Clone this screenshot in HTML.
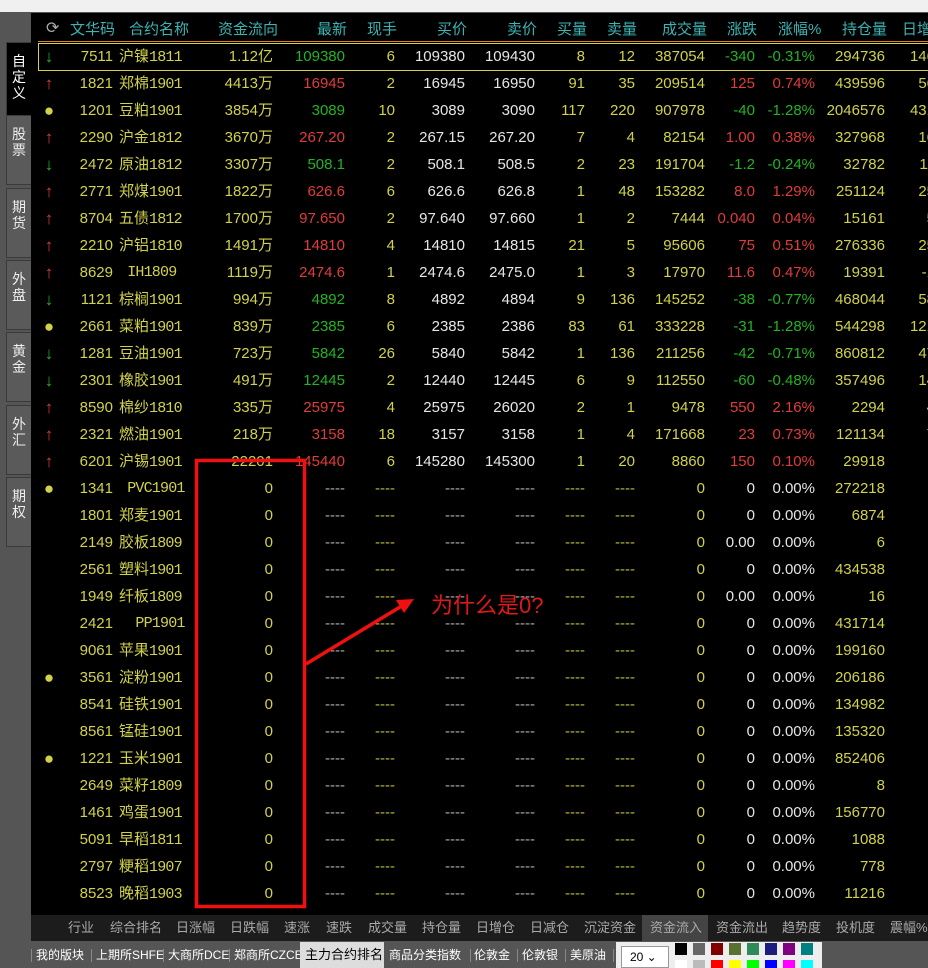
<!DOCTYPE html>
<html><head><meta charset="utf-8"><style>
*{margin:0;padding:0;box-sizing:border-box}
body{width:928px;height:968px;overflow:hidden;background:#555;position:relative;font-family:"Liberation Sans","Noto Sans CJK SC",sans-serif;font-size:15px}
#top{position:absolute;left:0;top:0;width:928px;height:12px;background:#f0f0f0}
#main{position:absolute;left:31px;top:13px;width:897px;height:902px;background:#000}
#hdr{position:absolute;left:38px;top:14px;height:28px;width:900px;color:#3cb4b4}
#hline{position:absolute;left:38px;top:41px;width:890px;height:1px;background:#e08020}
table{position:absolute;left:38px;top:43px;width:897px;border-collapse:collapse;table-layout:fixed}
tr{height:27px}
td{height:27px;line-height:1;padding:0;text-align:right;white-space:nowrap;overflow:hidden;vertical-align:middle;color:#d2d24a}
td.n{text-align:left;padding-left:6px}
.m{font-family:"Liberation Mono",monospace;font-size:15px;letter-spacing:-0.8px}
.g{color:#22b422}.r{color:#e03c3c}.w{color:#e6e6e6}.dsh{color:#aaa}.dy{color:#bbb640}
.ar{text-align:center;font-weight:bold;font-size:17px}
#sel{position:absolute;left:38px;top:43px;width:892px;height:28px;border:1px solid #d8d040}
#tabs{position:absolute;left:31px;top:915px;width:897px;height:26px;background:#1c1c1c;color:#aaa;font-size:13px}
#tabs span{position:absolute;top:0;line-height:26px}
#bot{position:absolute;left:0;top:942px;width:928px;height:26px;background:#555;color:#fff;font-size:12px}
#bot span{position:absolute;top:0;line-height:26px}
#bot i{position:absolute;top:7px;width:1px;height:13px;background:#888}
.side{position:absolute;left:6px;width:25px;background:#5a5a5a;border:1px solid #3a3a3a;border-right:none;color:#eee;font-size:14px;text-align:center;line-height:16px;padding-top:10px}
</style></head><body>
<div id="top"></div>
<div id="main"></div>
<div class="side" style="top:42px;height:78px;background:#000;color:#fff">自<br>定<br>义</div>
<div class="side" style="top:115px;height:70px">股<br>票</div>
<div class="side" style="top:188px;height:70px">期<br>货</div>
<div class="side" style="top:260px;height:70px">外<br>盘</div>
<div class="side" style="top:332px;height:70px">黄<br>金</div>
<div class="side" style="top:405px;height:70px">外<br>汇</div>
<div class="side" style="top:477px;height:70px">期<br>权</div>
<div id="hdr">
<span style="position:absolute;left:8px;top:4px;color:#aaa;font-size:16px">⟳</span>
<span style="position:absolute;left:32px;top:4px">文华码</span>
<span style="position:absolute;left:91px;top:4px">合约名称</span>
<span style="position:absolute;left:180px;top:4px">资金流向</span>
<span style="position:absolute;left:279px;top:4px">最新</span>
<span style="position:absolute;left:329px;top:4px">现手</span>
<span style="position:absolute;left:399px;top:4px">买价</span>
<span style="position:absolute;left:469px;top:4px">卖价</span>
<span style="position:absolute;left:519px;top:4px">买量</span>
<span style="position:absolute;left:569px;top:4px">卖量</span>
<span style="position:absolute;left:624px;top:4px">成交量</span>
<span style="position:absolute;left:689px;top:4px">涨跌</span>
<span style="position:absolute;left:740px;top:4px">涨幅%</span>
<span style="position:absolute;left:804px;top:4px">持仓量</span>
<span style="position:absolute;left:864px;top:4px">日增</span>
</div>
<div id="hline"></div>
<table>
<colgroup><col style="width:22px"><col style="width:53px"><col style="width:77px"><col style="width:83px"><col style="width:72px"><col style="width:50px"><col style="width:70px"><col style="width:70px"><col style="width:50px"><col style="width:50px"><col style="width:70px"><col style="width:50px"><col style="width:60px"><col style="width:70px"><col style="width:50px"></colgroup>
<tr><td class="ar g">↓</td><td>7511</td><td class="n">沪镍<span class="m">1811</span></td><td>1.12亿</td><td class="g">109380</td><td>6</td><td class="w">109380</td><td class="w">109430</td><td>8</td><td>12</td><td>387054</td><td class="g">-340</td><td class="g">-0.31%</td><td>294736</td><td>146</td></tr>
<tr><td class="ar r">↑</td><td>1821</td><td class="n">郑棉<span class="m">1901</span></td><td>4413万</td><td class="r">16945</td><td>2</td><td class="w">16945</td><td class="w">16950</td><td>91</td><td>35</td><td>209514</td><td class="r">125</td><td class="r">0.74%</td><td>439596</td><td>56</td></tr>
<tr><td class="ar">●</td><td>1201</td><td class="n">豆粕<span class="m">1901</span></td><td>3854万</td><td class="g">3089</td><td>10</td><td class="w">3089</td><td class="w">3090</td><td>117</td><td>220</td><td>907978</td><td class="g">-40</td><td class="g">-1.28%</td><td>2046576</td><td>431</td></tr>
<tr><td class="ar r">↑</td><td>2290</td><td class="n">沪金<span class="m">1812</span></td><td>3670万</td><td class="r">267.20</td><td>2</td><td class="w">267.15</td><td class="w">267.20</td><td>7</td><td>4</td><td>82154</td><td class="r">1.00</td><td class="r">0.38%</td><td>327968</td><td>16</td></tr>
<tr><td class="ar g">↓</td><td>2472</td><td class="n">原油<span class="m">1812</span></td><td>3307万</td><td class="g">508.1</td><td>2</td><td class="w">508.1</td><td class="w">508.5</td><td>2</td><td>23</td><td>191704</td><td class="g">-1.2</td><td class="g">-0.24%</td><td>32782</td><td>11</td></tr>
<tr><td class="ar r">↑</td><td>2771</td><td class="n">郑煤<span class="m">1901</span></td><td>1822万</td><td class="r">626.6</td><td>6</td><td class="w">626.6</td><td class="w">626.8</td><td>1</td><td>48</td><td>153282</td><td class="r">8.0</td><td class="r">1.29%</td><td>251124</td><td>25</td></tr>
<tr><td class="ar r">↑</td><td>8704</td><td class="n">五债<span class="m">1812</span></td><td>1700万</td><td class="r">97.650</td><td>2</td><td class="w">97.640</td><td class="w">97.660</td><td>1</td><td>2</td><td>7444</td><td class="r">0.040</td><td class="r">0.04%</td><td>15161</td><td>5</td></tr>
<tr><td class="ar r">↑</td><td>2210</td><td class="n">沪铝<span class="m">1810</span></td><td>1491万</td><td class="r">14810</td><td>4</td><td class="w">14810</td><td class="w">14815</td><td>21</td><td>5</td><td>95606</td><td class="r">75</td><td class="r">0.51%</td><td>276336</td><td>25</td></tr>
<tr><td class="ar r">↑</td><td>8629</td><td class="n m">&nbsp;IH1809</td><td>1119万</td><td class="r">2474.6</td><td>1</td><td class="w">2474.6</td><td class="w">2475.0</td><td>1</td><td>3</td><td>17970</td><td class="r">11.6</td><td class="r">0.47%</td><td>19391</td><td>-1</td></tr>
<tr><td class="ar g">↓</td><td>1121</td><td class="n">棕榈<span class="m">1901</span></td><td>994万</td><td class="g">4892</td><td>8</td><td class="w">4892</td><td class="w">4894</td><td>9</td><td>136</td><td>145252</td><td class="g">-38</td><td class="g">-0.77%</td><td>468044</td><td>58</td></tr>
<tr><td class="ar">●</td><td>2661</td><td class="n">菜粕<span class="m">1901</span></td><td>839万</td><td class="g">2385</td><td>6</td><td class="w">2385</td><td class="w">2386</td><td>83</td><td>61</td><td>333228</td><td class="g">-31</td><td class="g">-1.28%</td><td>544298</td><td>121</td></tr>
<tr><td class="ar g">↓</td><td>1281</td><td class="n">豆油<span class="m">1901</span></td><td>723万</td><td class="g">5842</td><td>26</td><td class="w">5840</td><td class="w">5842</td><td>1</td><td>136</td><td>211256</td><td class="g">-42</td><td class="g">-0.71%</td><td>860812</td><td>47</td></tr>
<tr><td class="ar g">↓</td><td>2301</td><td class="n">橡胶<span class="m">1901</span></td><td>491万</td><td class="g">12445</td><td>2</td><td class="w">12440</td><td class="w">12445</td><td>6</td><td>9</td><td>112550</td><td class="g">-60</td><td class="g">-0.48%</td><td>357496</td><td>14</td></tr>
<tr><td class="ar r">↑</td><td>8590</td><td class="n">棉纱<span class="m">1810</span></td><td>335万</td><td class="r">25975</td><td>4</td><td class="w">25975</td><td class="w">26020</td><td>2</td><td>1</td><td>9478</td><td class="r">550</td><td class="r">2.16%</td><td>2294</td><td>4</td></tr>
<tr><td class="ar r">↑</td><td>2321</td><td class="n">燃油<span class="m">1901</span></td><td>218万</td><td class="r">3158</td><td>18</td><td class="w">3157</td><td class="w">3158</td><td>1</td><td>4</td><td>171668</td><td class="r">23</td><td class="r">0.73%</td><td>121134</td><td>7</td></tr>
<tr><td class="ar r">↑</td><td>6201</td><td class="n">沪锡<span class="m">1901</span></td><td>22201</td><td class="r">145440</td><td>6</td><td class="w">145280</td><td class="w">145300</td><td>1</td><td>20</td><td>8860</td><td class="r">150</td><td class="r">0.10%</td><td>29918</td><td></td></tr>
<tr><td class="ar">●</td><td>1341</td><td class="n m">&nbsp;PVC1901</td><td>0</td><td class="dsh">----</td><td class="dy">----</td><td class="dsh">----</td><td class="dsh">----</td><td class="dy">----</td><td class="dy">----</td><td>0</td><td class="w">0</td><td class="w">0.00%</td><td>272218</td><td></td></tr>
<tr><td></td><td>1801</td><td class="n">郑麦<span class="m">1901</span></td><td>0</td><td class="dsh">----</td><td class="dy">----</td><td class="dsh">----</td><td class="dsh">----</td><td class="dy">----</td><td class="dy">----</td><td>0</td><td class="w">0</td><td class="w">0.00%</td><td>6874</td><td></td></tr>
<tr><td></td><td>2149</td><td class="n">胶板<span class="m">1809</span></td><td>0</td><td class="dsh">----</td><td class="dy">----</td><td class="dsh">----</td><td class="dsh">----</td><td class="dy">----</td><td class="dy">----</td><td>0</td><td class="w">0.00</td><td class="w">0.00%</td><td>6</td><td></td></tr>
<tr><td></td><td>2561</td><td class="n">塑料<span class="m">1901</span></td><td>0</td><td class="dsh">----</td><td class="dy">----</td><td class="dsh">----</td><td class="dsh">----</td><td class="dy">----</td><td class="dy">----</td><td>0</td><td class="w">0</td><td class="w">0.00%</td><td>434538</td><td></td></tr>
<tr><td></td><td>1949</td><td class="n">纤板<span class="m">1809</span></td><td>0</td><td class="dsh">----</td><td class="dy">----</td><td class="dsh">----</td><td class="dsh">----</td><td class="dy">----</td><td class="dy">----</td><td>0</td><td class="w">0.00</td><td class="w">0.00%</td><td>16</td><td></td></tr>
<tr><td></td><td>2421</td><td class="n m">&nbsp;&nbsp;PP1901</td><td>0</td><td class="dsh">----</td><td class="dy">----</td><td class="dsh">----</td><td class="dsh">----</td><td class="dy">----</td><td class="dy">----</td><td>0</td><td class="w">0</td><td class="w">0.00%</td><td>431714</td><td></td></tr>
<tr><td></td><td>9061</td><td class="n">苹果<span class="m">1901</span></td><td>0</td><td class="dsh">----</td><td class="dy">----</td><td class="dsh">----</td><td class="dsh">----</td><td class="dy">----</td><td class="dy">----</td><td>0</td><td class="w">0</td><td class="w">0.00%</td><td>199160</td><td></td></tr>
<tr><td class="ar">●</td><td>3561</td><td class="n">淀粉<span class="m">1901</span></td><td>0</td><td class="dsh">----</td><td class="dy">----</td><td class="dsh">----</td><td class="dsh">----</td><td class="dy">----</td><td class="dy">----</td><td>0</td><td class="w">0</td><td class="w">0.00%</td><td>206186</td><td></td></tr>
<tr><td></td><td>8541</td><td class="n">硅铁<span class="m">1901</span></td><td>0</td><td class="dsh">----</td><td class="dy">----</td><td class="dsh">----</td><td class="dsh">----</td><td class="dy">----</td><td class="dy">----</td><td>0</td><td class="w">0</td><td class="w">0.00%</td><td>134982</td><td></td></tr>
<tr><td></td><td>8561</td><td class="n">锰硅<span class="m">1901</span></td><td>0</td><td class="dsh">----</td><td class="dy">----</td><td class="dsh">----</td><td class="dsh">----</td><td class="dy">----</td><td class="dy">----</td><td>0</td><td class="w">0</td><td class="w">0.00%</td><td>135320</td><td></td></tr>
<tr><td class="ar">●</td><td>1221</td><td class="n">玉米<span class="m">1901</span></td><td>0</td><td class="dsh">----</td><td class="dy">----</td><td class="dsh">----</td><td class="dsh">----</td><td class="dy">----</td><td class="dy">----</td><td>0</td><td class="w">0</td><td class="w">0.00%</td><td>852406</td><td></td></tr>
<tr><td></td><td>2649</td><td class="n">菜籽<span class="m">1809</span></td><td>0</td><td class="dsh">----</td><td class="dy">----</td><td class="dsh">----</td><td class="dsh">----</td><td class="dy">----</td><td class="dy">----</td><td>0</td><td class="w">0</td><td class="w">0.00%</td><td>8</td><td></td></tr>
<tr><td></td><td>1461</td><td class="n">鸡蛋<span class="m">1901</span></td><td>0</td><td class="dsh">----</td><td class="dy">----</td><td class="dsh">----</td><td class="dsh">----</td><td class="dy">----</td><td class="dy">----</td><td>0</td><td class="w">0</td><td class="w">0.00%</td><td>156770</td><td></td></tr>
<tr><td></td><td>5091</td><td class="n">早稻<span class="m">1811</span></td><td>0</td><td class="dsh">----</td><td class="dy">----</td><td class="dsh">----</td><td class="dsh">----</td><td class="dy">----</td><td class="dy">----</td><td>0</td><td class="w">0</td><td class="w">0.00%</td><td>1088</td><td></td></tr>
<tr><td></td><td>2797</td><td class="n">粳稻<span class="m">1907</span></td><td>0</td><td class="dsh">----</td><td class="dy">----</td><td class="dsh">----</td><td class="dsh">----</td><td class="dy">----</td><td class="dy">----</td><td>0</td><td class="w">0</td><td class="w">0.00%</td><td>778</td><td></td></tr>
<tr><td></td><td>8523</td><td class="n">晚稻<span class="m">1903</span></td><td>0</td><td class="dsh">----</td><td class="dy">----</td><td class="dsh">----</td><td class="dsh">----</td><td class="dy">----</td><td class="dy">----</td><td>0</td><td class="w">0</td><td class="w">0.00%</td><td>11216</td><td></td></tr>
</table>
<div id="sel"></div>
<svg style="position:absolute;left:0;top:0" width="928" height="968">
<rect x="196.5" y="460.5" width="108" height="446" fill="none" stroke="#f01010" stroke-width="3.5"/>
<line x1="306" y1="664" x2="405" y2="604" stroke="#f01010" stroke-width="3.5"/>
<polygon points="414,599 396,600 404,613" fill="#f01010"/>
<text x="431" y="613" fill="#e01818" font-size="22" font-family="Liberation Sans,Noto Sans CJK SC,sans-serif">为什么是0?</text>
</svg>
<div id="tabs">
<span style="left:37px">行业</span><span style="left:79px">综合排名</span><span style="left:145px">日涨幅</span><span style="left:199px">日跌幅</span><span style="left:253px">速涨</span><span style="left:295px">速跌</span><span style="left:337px">成交量</span><span style="left:391px">持仓量</span><span style="left:445px">日增仓</span><span style="left:499px">日减仓</span><span style="left:553px">沉淀资金</span>
<span style="left:611px;width:66px;height:26px;background:#444;padding-left:8px">资金流入</span>
<span style="left:685px">资金流出</span><span style="left:751px">趋势度</span><span style="left:805px">投机度</span><span style="left:859px">震幅%</span>
</div>
<div id="bot">
<i style="left:31px"></i><span style="left:36px">我的版块</span><i style="left:91px"></i><span style="left:96px">上期所SHFE</span><i style="left:163px"></i><span style="left:168px">大商所DCE</span><i style="left:229px"></i><span style="left:234px">郑商所CZCE</span>
<span style="left:300px;width:84px;height:26px;background:#ddd;color:#000;padding-left:5px;font-size:13px">主力合约排名</span>
<span style="left:389px">商品分类指数</span><i style="left:470px"></i><span style="left:474px">伦敦金</span><i style="left:517px"></i><span style="left:522px">伦敦银</span><i style="left:565px"></i><span style="left:570px">美原油</span><i style="left:613px"></i>
<span style="left:616px;width:206px;height:26px;background:#eee"></span>
<span style="left:621px;top:4px;width:48px;height:22px;background:#fff;border:1px solid #999;color:#000;line-height:20px;padding-left:8px">20 ⌄</span>
</div>
<svg style="position:absolute;left:675px;top:943px" width="140" height="25">
<rect x="0" y="0" width="12" height="12" fill="#000"/><rect x="18" y="0" width="12" height="12" fill="#666"/><rect x="36" y="0" width="12" height="12" fill="#800000"/><rect x="54" y="0" width="12" height="12" fill="#5a7030"/><rect x="72" y="0" width="12" height="12" fill="#2e8b57"/><rect x="90" y="0" width="12" height="12" fill="#1c1c80"/><rect x="108" y="0" width="12" height="12" fill="#800080"/><rect x="126" y="0" width="12" height="12" fill="#008080"/>
<rect x="0" y="17" width="12" height="8" fill="#fff"/><rect x="18" y="17" width="12" height="8" fill="#bbb"/><rect x="36" y="17" width="12" height="8" fill="#f00"/><rect x="54" y="17" width="12" height="8" fill="#ff0"/><rect x="72" y="17" width="12" height="8" fill="#0f0"/><rect x="90" y="17" width="12" height="8" fill="#00f"/><rect x="108" y="17" width="12" height="8" fill="#f0f"/><rect x="126" y="17" width="12" height="8" fill="#0ff"/>
</svg>
</body></html>
